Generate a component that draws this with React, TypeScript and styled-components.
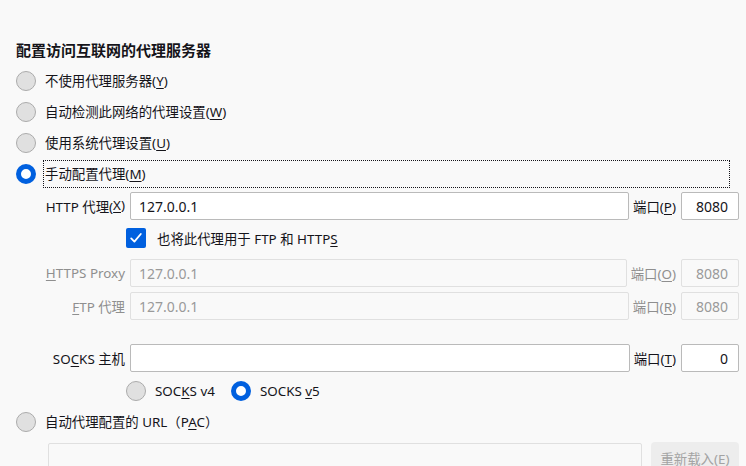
import React from "react";
import styled, { createGlobalStyle, css } from "styled-components";

const GlobalStyle = createGlobalStyle`
  html, body {
    margin: 0;
    padding: 0;
    background: #f9f9f9;
  }
  body {
    font-family: "Noto Sans", "Noto Sans CJK SC", sans-serif;
    font-size: 13.4px;
    color: #15141a;
    overflow: hidden;
  }
`;

const Page = styled.div`
  display: flex;
  flex-direction: column;
  padding: 40px 7px 0 16px;
  width: 746px;
  box-sizing: border-box;
  & > * {
    flex-shrink: 0;
  }
`;

const Title = styled.h1`
  margin: 0 0 5px;
  font-size: 15px;
  line-height: 20px;
  font-weight: 700;
  font-family: "Noto Sans CJK SC", "Noto Sans", sans-serif;
`;

const RadioRow = styled.div<{ $h?: number; $mt?: number }>`
  display: flex;
  align-items: center;
  height: ${(p) => p.$h ?? 31}px;
  margin-top: ${(p) => p.$mt ?? 0}px;
`;

const RadioCircle = styled.span<{ $checked?: boolean }>`
  flex: none;
  width: 20px;
  height: 20px;
  border-radius: 50%;
  box-sizing: border-box;
  ${(p) =>
    p.$checked
      ? css`
          background: #fff;
          border: 5.5px solid #0060df;
        `
      : css`
          background: #e0e0e0;
          border: 1px solid #ababab;
        `}
`;

const RadioLabel = styled.span<{ $focused?: boolean; $gap?: number }>`
  margin-left: ${(p) => p.$gap ?? 8}px;
  padding: 0 1px;
  line-height: 26px;
  white-space: nowrap;
  ${(p) =>
    p.$focused &&
    css`
      flex: 1;
      margin-right: 10px;
      outline: 1px dotted #15141a;
      outline-offset: 0;
    `}
`;

const Key = styled.u`
  text-decoration: underline;
  text-underline-offset: 2px;
`;

const FieldRow = styled.div<{ $mt: number }>`
  display: flex;
  align-items: center;
  height: 28px;
  margin-top: ${(p) => p.$mt}px;
  padding-left: 28px;
`;

const FieldLabel = styled.label<{ $disabled?: boolean }>`
  flex: none;
  width: 81px;
  margin-right: 5px;
  text-align: right;
  white-space: nowrap;
  display: flex;
  justify-content: flex-end;
  color: ${(p) => (p.$disabled ? "#8f8f8f" : "#15141a")};
`;

const TextInput = styled.input`
  flex: 1;
  min-width: 0;
  height: 28px;
  box-sizing: border-box;
  border: 1px solid #bababa;
  border-radius: 2px;
  background: #fff;
  padding: 0 8px;
  font: inherit;
  font-size: 14px;
  color: #15141a;
  outline: none;
  &:disabled {
    border-color: #e0e0e0;
    background: #f9f9f9;
    color: #9a9a9a;
  }
`;

const PortLabel = styled.label<{ $disabled?: boolean }>`
  flex: none;
  margin: 0 5px 0 4px;
  white-space: nowrap;
  color: ${(p) => (p.$disabled ? "#8f8f8f" : "#15141a")};
`;

const PortInput = styled(TextInput)`
  flex: none;
  width: 58px;
  text-align: right;
  padding: 0 10px 0 4px;
`;

const CheckRow = styled.div`
  display: flex;
  align-items: center;
  height: 36px;
  padding-left: 110px;
`;

const CheckBox = styled.span`
  flex: none;
  width: 20px;
  height: 20px;
  border-radius: 2px;
  background: #0060df;
  display: flex;
  align-items: center;
  justify-content: center;
`;

const CheckText = styled.span`
  margin-left: 11px;
  white-space: nowrap;
`;

const SocksVersionRow = styled(RadioRow)`
  padding-left: 110px;
`;

const SocksOption = styled.div`
  display: flex;
  align-items: center;
  margin-right: 15px;
`;

const PacRow = styled.div`
  display: flex;
  align-items: flex-start;
  margin-top: 6px;
  padding-left: 32px;
  gap: 9px;
`;

const PacInput = styled(TextInput)`
  height: 30px;
`;

const ReloadButton = styled.button`
  flex: none;
  width: 88px;
  height: 32px;
  margin-top: -1px;
  border: none;
  border-radius: 4px;
  background: #ededed;
  color: #a3a3a3;
  font: inherit;
  font-size: 13.4px;
  padding: 0;
`;

const Radio: React.FC<{
  checked?: boolean;
  focused?: boolean;
  children: React.ReactNode;
}> = ({ checked, focused, children }) => (
  <>
    <RadioCircle $checked={checked} />
    <RadioLabel $focused={focused}>{children}</RadioLabel>
  </>
);

export default function App() {
  return (
    <>
      <GlobalStyle />
      <Page>
        <Title>配置访问互联网的代理服务器</Title>
        <RadioRow>
          <Radio>
            不使用代理服务器(<Key>Y</Key>)
          </Radio>
        </RadioRow>
        <RadioRow>
          <Radio>
            自动检测此网络的代理设置(<Key>W</Key>)
          </Radio>
        </RadioRow>
        <RadioRow>
          <Radio>
            使用系统代理设置(<Key>U</Key>)
          </Radio>
        </RadioRow>
        <RadioRow>
          <Radio checked focused>
            手动配置代理(<Key>M</Key>)
          </Radio>
        </RadioRow>

        <FieldRow $mt={3}>
          <FieldLabel>
            HTTP 代理(<Key>X</Key>)
          </FieldLabel>
          <TextInput value="127.0.0.1" readOnly />
          <PortLabel>
            端口(<Key>P</Key>)
          </PortLabel>
          <PortInput value="8080" readOnly />
        </FieldRow>

        <CheckRow>
          <CheckBox>
            <svg width="14" height="14" viewBox="0 0 14 14" fill="none">
              <path
                d="M2.2 7.4 L5.4 10.6 L11.8 3"
                stroke="#fff"
                strokeWidth="1.8"
                strokeLinecap="round"
                strokeLinejoin="round"
              />
            </svg>
          </CheckBox>
          <CheckText>
            也将此代理用于 FTP 和 HTTP<Key>S</Key>
          </CheckText>
        </CheckRow>

        <FieldRow $mt={3}>
          <FieldLabel $disabled>
            <span>
              <Key>H</Key>TTPS Proxy
            </span>
          </FieldLabel>
          <TextInput value="127.0.0.1" disabled readOnly />
          <PortLabel $disabled>
            端口(<Key>O</Key>)
          </PortLabel>
          <PortInput value="8080" disabled readOnly />
        </FieldRow>

        <FieldRow $mt={5}>
          <FieldLabel $disabled>
            <span>
              <Key>F</Key>TP 代理
            </span>
          </FieldLabel>
          <TextInput value="127.0.0.1" disabled readOnly />
          <PortLabel $disabled>
            端口(<Key>R</Key>)
          </PortLabel>
          <PortInput value="8080" disabled readOnly />
        </FieldRow>

        <FieldRow $mt={24}>
          <FieldLabel>
            <span>
              SO<Key>C</Key>KS 主机
            </span>
          </FieldLabel>
          <TextInput value="" readOnly />
          <PortLabel>
            端口(<Key>T</Key>)
          </PortLabel>
          <PortInput value="0" readOnly />
        </FieldRow>

        <SocksVersionRow $h={30} $mt={4}>
          <SocksOption>
            <Radio>
              SOC<Key>K</Key>S v4
            </Radio>
          </SocksOption>
          <SocksOption>
            <Radio checked>
              SOCKS <Key>v</Key>5
            </Radio>
          </SocksOption>
        </SocksVersionRow>

        <RadioRow $h={30} $mt={1}>
          <Radio>
            自动代理配置的 URL（P<Key>A</Key>C）
          </Radio>
        </RadioRow>

        <PacRow>
          <PacInput value="" disabled readOnly />
          <ReloadButton disabled>
            重新载入(<Key>E</Key>)
          </ReloadButton>
        </PacRow>
      </Page>
    </>
  );
}
